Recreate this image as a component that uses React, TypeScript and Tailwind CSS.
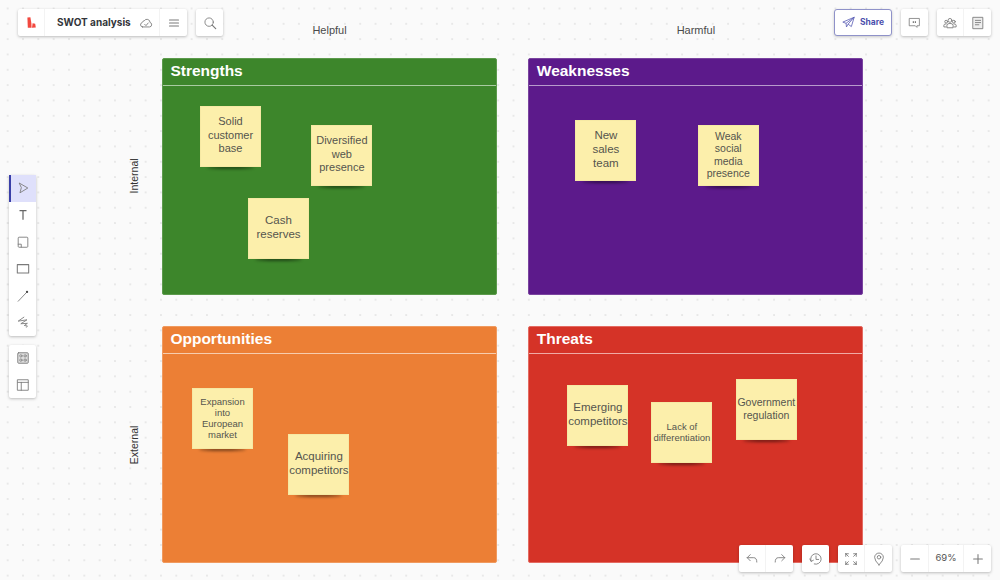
import type { ReactNode } from "react";

type Note = { text: string[]; left: number; top: number; size: string };

type Quadrant = {
  title: string;
  bg: string;
  border: string;
  line: string;
  notes: Note[];
};

const regular = "text-[11.5px] leading-[13.7px]";
const medium = "text-[11px] leading-[13.5px]";
const small = "text-[10.5px] leading-[12.3px]";
const tiny = "text-[9.5px] leading-[11px]";

const quadrants: Quadrant[] = [
  {
    title: "Strengths",
    bg: "bg-[#3d862b]",
    border: "border-[#5c9a4c]",
    line: "bg-[#a9cba1]",
    notes: [
      { text: ["Solid", "customer", "base"], left: 37, top: 47, size: medium },
      { text: ["Diversified", "web", "presence"], left: 148.4, top: 66, size: medium },
      { text: ["Cash", "reserves"], left: 85, top: 139, size: regular },
    ],
  },
  {
    title: "Weaknesses",
    bg: "bg-[#5c1a8b]",
    border: "border-[#7a449f]",
    line: "bg-[#b79bcc]",
    notes: [
      { text: ["New", "sales", "team"], left: 46, top: 61.4, size: regular },
      { text: ["Weak", "social", "media", "presence"], left: 168.4, top: 66, size: small },
    ],
  },
  {
    title: "Opportunities",
    bg: "bg-[#ec7f35]",
    border: "border-[#f09a5f]",
    line: "bg-[#f7cdae]",
    notes: [
      { text: ["Expansion", "into", "European", "market"], left: 29, top: 61, size: tiny },
      { text: ["Acquiring", "competitors"], left: 125.4, top: 107, size: regular },
    ],
  },
  {
    title: "Threats",
    bg: "bg-[#d53327]",
    border: "border-[#e46b62]",
    line: "bg-[#f0aaa5]",
    notes: [
      { text: ["Emerging", "competitors"], left: 38, top: 58, size: regular },
      { text: ["Lack of", "differentiation"], left: 122, top: 75, size: tiny },
      { text: ["Government", "regulation"], left: 206.4, top: 52, size: small },
    ],
  },
];

function Sticky({ note }: { note: Note }) {
  return (
    <div className="absolute h-[61px] w-[61px]" style={{ left: note.left, top: note.top }}>
      <div className="absolute bottom-[-2px] left-[7px] right-[7px] h-[3px] rounded-[50%] bg-black/50 blur-[1.5px]" />
      <div
        className={`relative flex h-full w-full flex-col items-center justify-center border border-[#f6e9a4] bg-[#fcefab] pb-[2px] text-center text-[#55554e] ${note.size}`}
      >
        {note.text.map((line) => (
          <span key={line} className="whitespace-nowrap">
            {line}
          </span>
        ))}
      </div>
    </div>
  );
}

function Panel({ quadrant, className }: { quadrant: Quadrant; className: string }) {
  return (
    <section
      className={`relative flex flex-col rounded-[2px] border ${quadrant.bg} ${quadrant.border} ${className}`}
    >
      <h2 className="h-[26px] pl-[7.4px] pt-[2px] text-[15.5px] font-bold leading-[20px] text-white">
        {quadrant.title}
      </h2>
      <div className={`h-px ${quadrant.line}`} />
      {quadrant.notes.map((note) => (
        <Sticky key={note.text.join(" ")} note={note} />
      ))}
    </section>
  );
}

function Card({ children, className = "" }: { children: ReactNode; className?: string }) {
  return (
    <div className={`flex h-[27px] rounded-[2px] bg-white shadow-[0_1px_3px_rgba(0,0,0,0.25)] ${className}`}>
      {children}
    </div>
  );
}

function Cell({ children, className = "" }: { children: ReactNode; className?: string }) {
  return <div className={`flex h-[27px] w-[27px] items-center justify-center ${className}`}>{children}</div>;
}

function ToolCell({ children, className = "" }: { children: ReactNode; className?: string }) {
  return <div className={`flex h-[26.8px] w-[27px] items-center justify-center ${className}`}>{children}</div>;
}

function Icon({ children, size = 14 }: { children: ReactNode; size?: number }) {
  return (
    <svg
      width={size}
      height={size}
      viewBox="0 0 16 16"
      fill="none"
      stroke="#7a7a7a"
      strokeWidth="1"
      strokeLinecap="round"
      strokeLinejoin="round"
    >
      {children}
    </svg>
  );
}

export default function App() {
  return (
    <div className="relative h-[580px] w-[1000px] overflow-hidden bg-[#fafafa] bg-[radial-gradient(circle,#dcdcdc_0.6px,transparent_0.8px)] bg-[size:15.33px_15.33px] bg-[position:0px_0.8px] font-['Liberation_Sans',sans-serif]">
      <main className="grid grid-cols-[54px_335px_31.4px_335px] grid-rows-[58px_237px_31px_237px] pl-[108px]">
        <div className="col-start-2 row-start-1 flex items-start justify-center pt-[24px] text-[11px] leading-[13px] text-[#4a4a4a]">
          Helpful
        </div>
        <div className="col-start-4 row-start-1 flex items-start justify-center pt-[24px] text-[11px] leading-[13px] text-[#4a4a4a]">
          Harmful
        </div>
        <div className="col-start-1 row-start-2 flex items-center justify-center pb-[2px]">
          <span className="-rotate-90 text-[10.5px] text-[#333]">Internal</span>
        </div>
        <div className="col-start-1 row-start-4 flex items-center justify-center">
          <span className="-rotate-90 text-[10.5px] text-[#333]">External</span>
        </div>
        <Panel quadrant={quadrants[0]} className="col-start-2 row-start-2" />
        <Panel quadrant={quadrants[1]} className="col-start-4 row-start-2" />
        <Panel quadrant={quadrants[2]} className="col-start-2 row-start-4" />
        <Panel quadrant={quadrants[3]} className="col-start-4 row-start-4" />
      </main>

      {/* top left */}
      <div className="absolute left-[18px] top-[9px] flex gap-[9px]">
        <Card className="w-[169px]">
          <Cell className="border-r border-[#f3f3f3]">
            <svg width="9" height="11" viewBox="0 0 9 11">
              <path d="M0.4 0.6 L3.4 0.2 L4.4 6.4 L4.6 10.7 L0.8 10.7 Z" fill="#f2483f" />
              <path d="M5 10.7 L5.6 6.2 L8.2 6.8 L8.8 10.4 Z" fill="#f2483f" />
            </svg>
          </Cell>
          <div className="flex w-[88px] items-center pl-[12px] font-['Inter',sans-serif] text-[10px] font-bold whitespace-nowrap text-[#33353a]">
            SWOT analysis
          </div>
          <Cell className="border-r border-[#f3f3f3]">
            <Icon>
              <path d="M4 12.5 H12 A2.6 2.6 0 0 0 12.6 7.4 A3.6 3.6 0 0 0 6 5.4 A3 3 0 0 0 3.6 7.6 A2.5 2.5 0 0 0 4 12.5 Z" />
              <path d="M6.5 9.5 L8 11 L10.5 8" />
            </Icon>
          </Cell>
          <Cell>
            <Icon size={12}>
              <path d="M2 4 H14 M2 8 H14 M2 12 H14" strokeWidth="1.4" />
            </Icon>
          </Cell>
        </Card>
        <Card className="w-[27px]">
          <Cell>
            <Icon>
              <circle cx="7" cy="7" r="4.8" />
              <path d="M10.5 10.5 L14.5 14.5" strokeWidth="1.4" />
            </Icon>
          </Cell>
        </Card>
      </div>

      {/* top right */}
      <div className="absolute right-[9px] top-[9px] flex gap-[9px]">
        <div className="flex h-[27px] w-[58px] items-center justify-center gap-[5px] rounded-[3px] border border-[#8f92c9] bg-white shadow-[0_1px_3px_rgba(0,0,0,0.2)]">
          <svg width="13" height="13" viewBox="0 0 16 16" fill="none" stroke="#5b5fb5" strokeWidth="1" strokeLinejoin="round">
            <path d="M1 7.5 L15 1.5 L11.5 13 L7.5 10 L5.5 13.5 L5 9 Z" />
            <path d="M5 9 L15 1.5 L7.5 10" />
          </svg>
          <span className="font-['Inter',sans-serif] text-[8.5px] font-bold text-[#4c50ad]">Share</span>
        </div>
        <Card className="w-[27px]">
          <Cell>
            <Icon size={13}>
              <path d="M2 3 H14 V12 H11 V14 L9 12 H2 Z" />
              <path d="M6.5 7 V8 M9 7 V8" stroke="#444444" strokeWidth="1.2" />
            </Icon>
          </Cell>
        </Card>
        <Card className="w-[54px]">
          <Cell className="border-r border-[#f3f3f3]">
            <Icon>
              <circle cx="8" cy="5" r="2.2" />
              <circle cx="3.6" cy="6.5" r="1.6" />
              <circle cx="12.4" cy="6.5" r="1.6" />
              <path d="M4.5 13 V10.5 Q4.5 8.5 8 8.5 Q11.5 8.5 11.5 10.5 V13 Z" />
              <path d="M3.5 12.5 H1 V10.5 Q1 9 3.5 9 M12.5 12.5 H15 V10.5 Q15 9 12.5 9" />
            </Icon>
          </Cell>
          <Cell>
            <Icon>
              <rect x="2.5" y="1.5" width="11" height="13" fill="#eeeeee" />
              <path d="M5 5 H11 M5 7.5 H11 M5 10 H9" />
            </Icon>
          </Cell>
        </Card>
      </div>

      {/* left toolbar */}
      <div className="absolute left-[9px] top-[175px] flex w-[27px] flex-col gap-[9px]">
        <div className="rounded-[2px] bg-white shadow-[0_1px_3px_rgba(0,0,0,0.25)]">
          <ToolCell className="border-l-2 border-[#3a3fa8] bg-[#dfe0fb] pr-[2px]">
            <Icon>
              <path d="M4 2.5 L13.5 8 L4.5 13.5 L6 8 Z" />
            </Icon>
          </ToolCell>
          <ToolCell>
            <Icon>
              <path d="M4 3 H12 M8 3 V13.5" stroke="#666666" strokeWidth="1.4" strokeLinecap="butt" />
            </Icon>
          </ToolCell>
          <ToolCell>
            <Icon>
              <path d="M6 14 H3.5 Q2.5 14 2.5 13 V3.5 Q2.5 2.5 3.5 2.5 H12.5 Q13.5 2.5 13.5 3.5 V13 Q13.5 14 12.5 14 H6 V10.5 H2.5" />
            </Icon>
          </ToolCell>
          <ToolCell>
            <Icon>
              <rect x="1.5" y="3" width="13" height="9.5" strokeWidth="1.2" />
            </Icon>
          </ToolCell>
          <ToolCell>
            <Icon>
              <path d="M2.5 14 L12 4" />
              <circle cx="12.6" cy="3.4" r="1.3" fill="#444444" stroke="none" />
            </Icon>
          </ToolCell>
          <ToolCell>
            <Icon>
              <path d="M9 2.5 L2.5 7 L12.5 5.5 L5.5 10 L13 9.5 L9.5 12 L13 12.5 L12 14" />
            </Icon>
          </ToolCell>
        </div>
        <div className="rounded-[2px] bg-white shadow-[0_1px_3px_rgba(0,0,0,0.25)]">
          <ToolCell>
            <Icon>
              <rect x="2" y="2" width="12" height="12" rx="1" fill="#dddddd" />
              <circle cx="5.6" cy="5.6" r="1.3" fill="#fff" />
              <circle cx="10.4" cy="5.6" r="1.3" fill="#fff" />
              <circle cx="5.6" cy="10.4" r="1.3" fill="#fff" />
              <circle cx="10.4" cy="10.4" r="1.3" fill="#fff" />
            </Icon>
          </ToolCell>
          <ToolCell>
            <Icon>
              <rect x="2" y="2" width="12" height="12" />
              <path d="M2 5 H14 M6 5 V14" />
            </Icon>
          </ToolCell>
        </div>
      </div>

      {/* bottom right */}
      <div className="absolute bottom-[8px] right-[9px] flex gap-[9px]">
        <Card className="w-[54px]">
          <Cell className="border-r border-[#f3f3f3]">
            <Icon>
              <path d="M6 3 L2.5 6.5 L6 10" />
              <path d="M2.5 6.5 H10 Q13.5 6.5 13.5 11.5" />
            </Icon>
          </Cell>
          <Cell>
            <Icon>
              <path d="M10 3 L13.5 6.5 L10 10" />
              <path d="M13.5 6.5 H6 Q2.5 6.5 2.5 11.5" />
            </Icon>
          </Cell>
        </Card>
        <Card className="w-[27px]">
          <Cell>
            <Icon>
              <path d="M2.4 10.5 A6 6 0 1 1 6 13.7" />
              <path d="M1 8 L2.4 10.8 L5 9.4" />
              <path d="M8 4.5 V8.5 H11" />
            </Icon>
          </Cell>
        </Card>
        <Card className="w-[54px]">
          <Cell className="border-r border-[#f3f3f3]">
            <Icon>
              <path d="M2 2 L5 5 M2 2 H5 M2 2 V5 M14 2 L11 5 M14 2 H11 M14 2 V5 M2 14 L5 11 M2 14 H5 M2 14 V11 M14 14 L11 11 M14 14 H11 M14 14 V11" />
            </Icon>
          </Cell>
          <Cell>
            <Icon>
              <path d="M8 14.8 Q3 9.8 3 6.2 A5 5 0 0 1 13 6.2 Q13 9.8 8 14.8 Z" />
              <circle cx="8" cy="6" r="2" />
            </Icon>
          </Cell>
        </Card>
        <Card className="w-[90px]">
          <Cell>
            <Icon>
              <path d="M3 8 H13" strokeWidth="1.2" />
            </Icon>
          </Cell>
          <div className="flex w-[36px] items-center justify-center border-x border-[#f3f3f3] font-['Inter',sans-serif] text-[9.5px] text-[#555]">
            69%
          </div>
          <Cell>
            <Icon>
              <path d="M3 8 H13 M8 3 V13" strokeWidth="1.2" />
            </Icon>
          </Cell>
        </Card>
      </div>
    </div>
  );
}
